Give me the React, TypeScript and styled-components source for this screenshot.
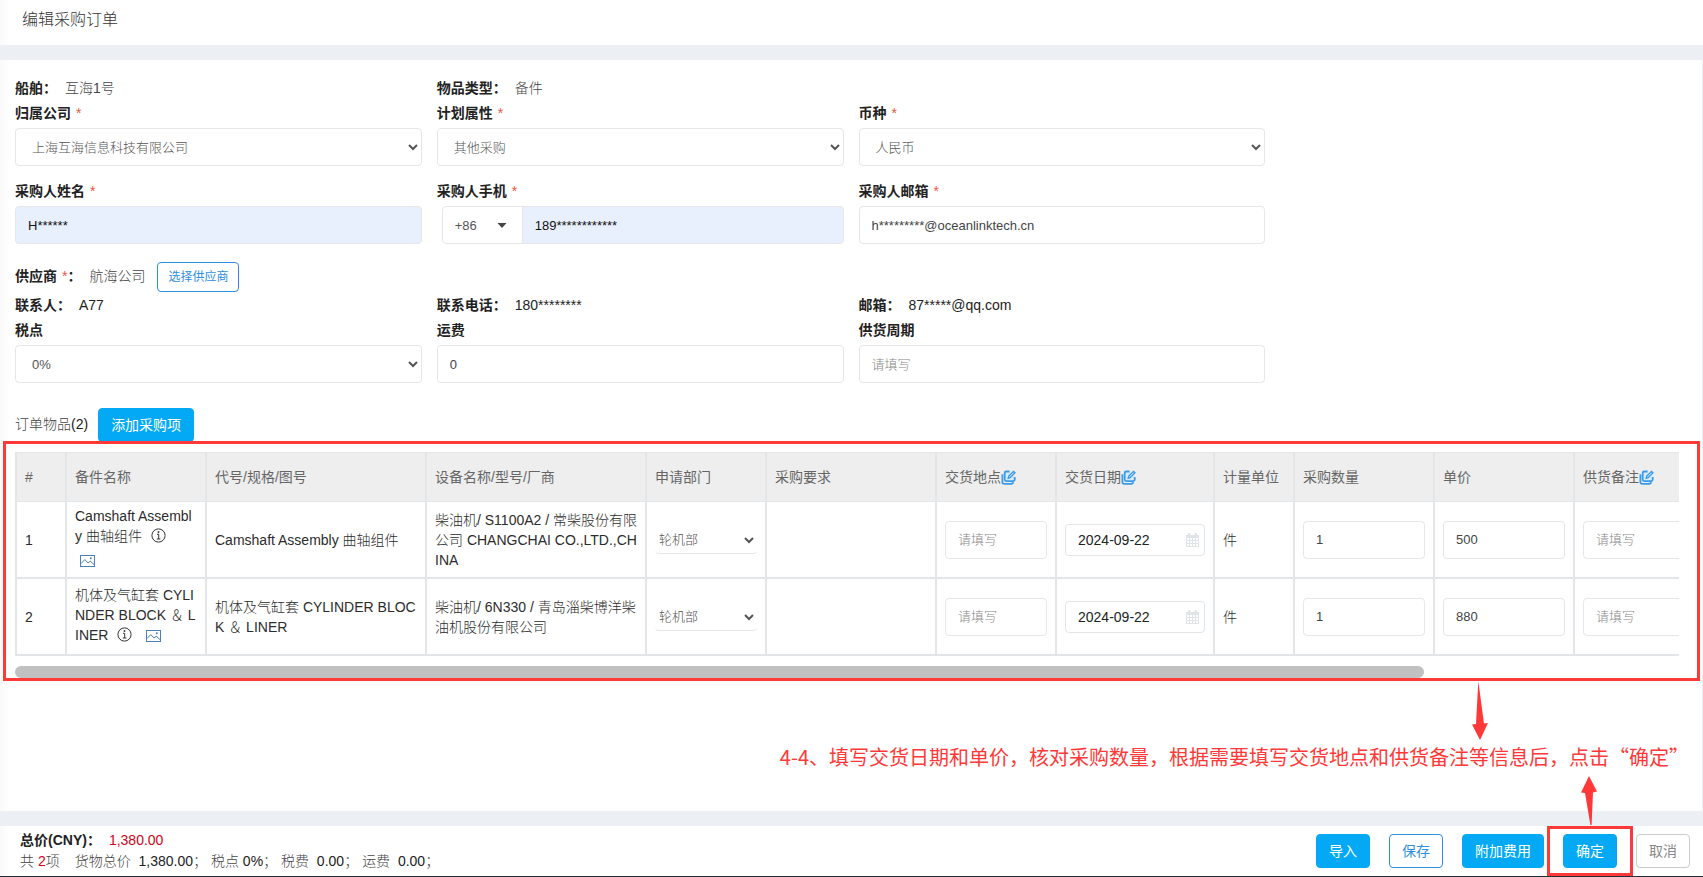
import React, { useEffect, useRef, useState } from "react";
import styled, { createGlobalStyle, css } from "styled-components";

const color = {
  text: "#222",
  soft: "#666",
  label: "#222",
  band: "#eceff4",
  border: "#e7e7e9",
  grid: "#e2e6e9",
  primary: "#03a9f4",
  link: "#2f8fe0",
  mark: "#ff3838",
  price: "#d0021b",
};

const GlobalStyle = createGlobalStyle`
  * { box-sizing: border-box; }
  body { margin: 0; }
  body, button, input, select {
    font-family: "Liberation Sans", "Noto Sans CJK SC", sans-serif;
    font-size: 14px;
    color: ${color.text};
  }
`;

const Page = styled.div`
  display: flex;
  flex-direction: column;
  min-height: 100vh;
  background: ${color.band};
`;

const surface = css`
  background: linear-gradient(to right, #fafafa, #fff 10px);
`;

const Header = styled.header`
  ${surface}
  padding: 8px 22px 13px;
  margin-bottom: 15px;
`;

const Title = styled.h1`
  margin: 0;
  font-size: 16px;
  line-height: 24px;
  font-weight: 300;
  color: #333;
`;

const Panel = styled.main`
  ${surface}
  flex: 1;
  margin: 0 1px 15px 0;
  padding-top: 16px;
`;

const Grid = styled.div`
  display: grid;
  grid-template-columns: repeat(4, 1fr);
  column-gap: 15px;
  padding: 0 15px;
`;

const Info = styled.div<{ $col?: number }>`
  grid-column: ${(p) => p.$col ?? "auto"};
  display: flex;
  gap: 8px;
  line-height: 25px;
`;

const SupplierRow = styled(Info)`
  grid-column: 1 / -1;
  padding: 5px 0 1px;
  line-height: 28px;
`;

const Name = styled.span`
  font-weight: bold;
  color: ${color.label};
`;

const Soft = styled.span`
  font-weight: 300;
  color: #444;
`;

const Star = styled.span`
  margin-left: 5px;
  font-weight: normal;
  color: #f0543f;
`;

const FieldBox = styled.div<{ $col?: number }>`
  grid-column: ${(p) => p.$col ?? "auto"};
  display: flex;
  flex-direction: column;
  gap: 2px;
  margin-bottom: 13px;
`;

const FieldLabel = styled.label`
  line-height: 25px;
  font-weight: bold;
  color: ${color.label};
`;

const control = css`
  width: 100%;
  height: 38px;
  padding: 0 12px;
  border: 1px solid ${color.border};
  border-radius: 4px;
  background: #fff;
  font-size: 13px;
  font-weight: 300;
  color: #444;
`;

const TextInput = styled.input<{ $filled?: boolean }>`
  ${control}
  ${(p) => p.$filled && css`
    background: #e8f0fe;
    color: #111;
  `}
  &::placeholder {
    color: #888;
  }
`;

const Select = styled.select`
  ${control}
  color: #555;
`;

const PhoneGroup = styled.div`
  display: flex;
  margin-left: 5px;
`;

const PrefixButton = styled.button`
  display: flex;
  align-items: center;
  justify-content: space-between;
  flex: none;
  width: 81px;
  height: 38px;
  margin-right: -1px;
  padding: 0 15px 0 12px;
  border: 1px solid ${color.border};
  border-radius: 4px 0 0 4px;
  background: #fff;
  font-size: 13px;
  color: #555;
`;

const PhoneInput = styled(TextInput)`
  border-radius: 0 4px 4px 0;
`;

const Button = styled.button<{ $kind?: "primary" | "outline" | "muted" | "small" }>`
  height: 34px;
  padding: 0 12px;
  border: 1px solid ${color.primary};
  border-radius: 4px;
  background: ${color.primary};
  line-height: 20px;
  color: #fff;
  white-space: nowrap;
  ${(p) => (p.$kind === "outline" || p.$kind === "small") && css`
    border-color: ${color.link};
    background: #fff;
    color: ${color.link};
  `}
  ${(p) => p.$kind === "small" && css`
    height: 30px;
    margin-left: 4px;
    padding: 0 10px;
    font-size: 12px;
  `}
  ${(p) => p.$kind === "muted" && css`
    border-color: #ccc;
    background: #fff;
    color: #888;
  `}
`;

const ItemsBar = styled.div`
  display: flex;
  gap: 10px;
  padding: 12px 15px 0;
  line-height: 32px;
`;

const MarkedArea = styled.section`
  position: relative;
  margin: -1px 2px 0 3px;
  padding: 8px 18px 0 9px;
  border: 3px solid ${color.mark};
`;

const Scroller = styled.div`
  overflow-x: auto;
  scrollbar-width: none;
`;

const Track = styled.div`
  height: 12px;
  margin-top: 10px;
`;

const Thumb = styled.div`
  height: 12px;
  border-radius: 6px;
  background: #c1c1c1;
`;

const Table = styled.table`
  width: 1965px;
  table-layout: fixed;
  border-collapse: separate;
  border-spacing: 0;
  border-left: 2px solid ${color.grid};
  line-height: 20px;
`;

const Th = styled.th`
  height: 50px;
  padding: 0 8px;
  border: solid ${color.grid};
  border-width: 1px 2px 1px 0;
  background: #eee;
  text-align: left;
  font-weight: normal;
  color: ${color.soft};
  white-space: nowrap;
`;

const Td = styled.td`
  height: 77px;
  padding: 0 8px;
  border: solid ${color.grid};
  border-width: 0 2px 2px 0;
  word-break: break-all;
  font-weight: 300;
  color: #2c2c2c;
`;

const DeptSelect = styled.select`
  display: block;
  width: 100%;
  height: 28px;
  border: 0;
  border-bottom: 1px solid ${color.border};
  border-radius: 4px;
  background: #fff;
  font-size: 13px;
  font-weight: 300;
  color: #555;
`;

const DateBox = styled.div`
  display: flex;
  align-items: center;
  height: 32px;
  padding: 0 5px 0 12px;
  border: 1px solid ${color.grid};
  border-radius: 4px;
`;

const DateInput = styled.input`
  flex: 1;
  min-width: 0;
  padding: 0;
  border: 0;
  background: none;
`;

const CellIcon = styled.svg`
  margin: 0 5px 7px;
  vertical-align: -9px;
`;

const HeadIcon = styled.svg`
  vertical-align: -3px;
`;

const Note = styled.div`
  display: flex;
  flex-direction: column;
  align-items: flex-end;
`;

const DownArrow = styled.svg`
  margin-right: 214px;
`;

const NoteText = styled.p`
  margin: 2px 13px 0 0;
  font-family: "Noto Sans CJK SC", sans-serif;
  font-size: 20px;
  line-height: 30px;
  color: ${color.mark};
`;

const Footer = styled.footer`
  ${surface}
  display: flex;
  align-items: center;
  justify-content: space-between;
  min-height: 51px;
  padding: 0 13px 0 20px;
  border-bottom: 1px solid #1f2d3d;
`;

const Totals = styled.div`
  line-height: 21px;
`;

const SumLine = styled.div`
  display: flex;
  gap: 4px;
`;

const TotalLine = styled(SumLine)`
  gap: 8px;
`;

const Count = styled.span`
  margin-right: 11px;
`;

const Price = styled.span`
  color: ${color.price};
`;

const Actions = styled.div`
  display: flex;
  gap: 19px;
`;

const ConfirmSlot = styled.div`
  position: relative;
`;

const ConfirmFrame = styled.div`
  position: absolute;
  inset: -8px -16px;
  border: 3px solid ${color.mark};
  pointer-events: none;
`;

const UpArrow = styled.svg`
  position: absolute;
  left: 18px;
  bottom: 43px;
`;

function EditIcon() {
  return (
    <HeadIcon width="15" height="15" viewBox="0 0 15 15" fill="none" stroke="#3b9ae8">
      <path d="M8.6 1.5 H5.2 Q3.7 1.5 3.7 3 V9.6 Q3.7 11.1 5.2 11.1 H12.2 Q13.7 11.1 13.7 9.6 V7" fill="#d9ecfb" strokeWidth="1.8" />
      <path d="M1.4 4.2 V12 Q1.4 13.8 3.2 13.8 H10.8 L12.6 12.4" strokeWidth="1.8" />
      <path d="M7.2 8.2 L7.7 6.2 L12.5 1.4 L14 2.8 L9.2 7.6 Z" fill="#d9ecfb" strokeWidth="1.3" />
    </HeadIcon>
  );
}

function InfoIcon() {
  return (
    <CellIcon width="15" height="15" viewBox="0 0 15 15" fill="none" stroke="#333">
      <circle cx="7.5" cy="7.5" r="6.6" />
      <path d="M6 6.3 H7.7 V11 M5.8 11 H9.4" />
      <circle cx="7.5" cy="4" r="0.9" fill="#333" stroke="none" />
    </CellIcon>
  );
}

function PictureIcon() {
  return (
    <CellIcon width="15" height="12" viewBox="0 0 15 12" fill="none" stroke="#4a7fc1">
      <rect x="0.5" y="0.5" width="14" height="11" />
      <path d="M1 8.5 L4.8 4.6 L8 8 L10.2 6.2 L14 9.5" />
      <circle cx="10.8" cy="3.2" r="1" fill="#4a7fc1" stroke="none" />
    </CellIcon>
  );
}

function CalendarIcon() {
  return (
    <svg width="13" height="14" viewBox="0 0 13 14" fill="#dfe4e6">
      <path d="M0 2 H2 V0.8 Q2 0 3 0 H3.6 Q4.5 0 4.5 0.8 V2 H8.5 V0.8 Q8.5 0 9.4 0 H10 Q11 0 11 0.8 V2 H13 V14 H0 Z" />
      <g fill="#fff">
        {[5, 8, 11].map((y) => [1, 4, 7, 10].map((x) => <rect key={`${x}-${y}`} x={x} y={y} width="2" height="2" />))}
      </g>
    </svg>
  );
}

interface FieldProps {
  id: string;
  label: string;
  required?: boolean;
  col?: number;
  children: React.ReactNode;
}

function Field({ id, label, required, col, children }: FieldProps) {
  return (
    <FieldBox $col={col}>
      <FieldLabel htmlFor={id}>
        {label}
        {required && <Star>*</Star>}
      </FieldLabel>
      {children}
    </FieldBox>
  );
}

const columns: { title: string; width: number; editable?: boolean }[] = [
  { title: "#", width: 50 },
  { title: "备件名称", width: 140 },
  { title: "代号/规格/图号", width: 220 },
  { title: "设备名称/型号/厂商", width: 220 },
  { title: "申请部门", width: 120 },
  { title: "采购要求", width: 170 },
  { title: "交货地点", width: 120, editable: true },
  { title: "交货日期", width: 158, editable: true },
  { title: "计量单位", width: 80 },
  { title: "采购数量", width: 140 },
  { title: "单价", width: 140 },
  { title: "供货备注", width: 405, editable: true },
];

const items = [
  {
    name: "Camshaft Assembly 曲轴组件",
    code: "Camshaft Assembly 曲轴组件",
    device: "柴油机/ S1100A2 / 常柴股份有限公司 CHANGCHAI CO.,LTD.,CHINA",
    price: "500",
  },
  {
    name: "机体及气缸套 CYLINDER BLOCK ＆ LINER",
    code: "机体及气缸套 CYLINDER BLOCK ＆ LINER",
    device: "柴油机/ 6N330 / 青岛淄柴博洋柴油机股份有限公司",
    price: "880",
  },
];

function ItemsTable() {
  const ref = useRef<HTMLDivElement>(null);
  const [bar, setBar] = useState({ width: 85, left: 0 });

  const measure = () => {
    const el = ref.current;
    if (!el) return;
    setBar({
      width: (el.clientWidth / el.scrollWidth) * 100,
      left: (el.scrollLeft / el.scrollWidth) * 100,
    });
  };

  useEffect(() => {
    measure();
    window.addEventListener("resize", measure);
    return () => window.removeEventListener("resize", measure);
  }, []);

  return (
    <MarkedArea>
      <Scroller ref={ref} onScroll={measure}>
        <Table>
          <colgroup>
            {columns.map((c) => (
              <col key={c.title} width={c.width} />
            ))}
          </colgroup>
          <thead>
            <tr>
              {columns.map((c) => (
                <Th key={c.title}>
                  {c.title}
                  {c.editable && <EditIcon />}
                </Th>
              ))}
            </tr>
          </thead>
          <tbody>
            {items.map((it, i) => (
              <tr key={i}>
                <Td>{i + 1}</Td>
                <Td>
                  {it.name} <InfoIcon /> <PictureIcon />
                </Td>
                <Td>{it.code}</Td>
                <Td>{it.device}</Td>
                <Td>
                  <DeptSelect aria-label="申请部门">
                    <option>轮机部</option>
                  </DeptSelect>
                </Td>
                <Td />
                <Td><TextInput aria-label="交货地点" placeholder="请填写" /></Td>
                <Td>
                  <DateBox>
                    <DateInput aria-label="交货日期" defaultValue="2024-09-22" />
                    <CalendarIcon />
                  </DateBox>
                </Td>
                <Td>件</Td>
                <Td><TextInput aria-label="采购数量" defaultValue="1" /></Td>
                <Td><TextInput aria-label="单价" defaultValue={it.price} /></Td>
                <Td><TextInput aria-label="供货备注" placeholder="请填写" /></Td>
              </tr>
            ))}
          </tbody>
        </Table>
      </Scroller>
      <Track>
        <Thumb style={{ width: `${bar.width}%`, marginLeft: `${bar.left}%` }} />
      </Track>
    </MarkedArea>
  );
}

export default function App() {
  return (
    <Page>
      <GlobalStyle />
      <Header>
        <Title>编辑采购订单</Title>
      </Header>

      <Panel>
        <Grid>
          <Info>
            <Name>船舶：</Name>
            <Soft>互海1号</Soft>
          </Info>
          <Info $col={2}>
            <Name>物品类型：</Name>
            <Soft>备件</Soft>
          </Info>

          <Field id="company" label="归属公司" required col={1}>
            <Select id="company"><option>上海互海信息科技有限公司</option></Select>
          </Field>
          <Field id="plan" label="计划属性" required>
            <Select id="plan"><option>其他采购</option></Select>
          </Field>
          <Field id="currency" label="币种" required>
            <Select id="currency"><option>人民币</option></Select>
          </Field>

          <Field id="buyer" label="采购人姓名" required col={1}>
            <TextInput id="buyer" $filled defaultValue="H******" />
          </Field>
          <Field id="phone" label="采购人手机" required>
            <PhoneGroup>
              <PrefixButton type="button">
                +86
                <svg width="10" height="5" viewBox="0 0 10 5"><path d="M0.5 0 H9.5 L5 5 Z" fill="#444" /></svg>
              </PrefixButton>
              <PhoneInput id="phone" $filled defaultValue="189************" />
            </PhoneGroup>
          </Field>
          <Field id="mail" label="采购人邮箱" required>
            <TextInput id="mail" defaultValue="h*********@oceanlinktech.cn" />
          </Field>

          <SupplierRow>
            <Name>供应商<Star>*</Star>：</Name>
            <Soft>航海公司</Soft>
            <Button type="button" $kind="small">选择供应商</Button>
          </SupplierRow>

          <Info $col={1}>
            <Name>联系人：</Name>
            <span>A77</span>
          </Info>
          <Info>
            <Name>联系电话：</Name>
            <span>180********</span>
          </Info>
          <Info>
            <Name>邮箱：</Name>
            <span>87*****@qq.com</span>
          </Info>

          <Field id="tax" label="税点" col={1}>
            <Select id="tax"><option>0%</option></Select>
          </Field>
          <Field id="freight" label="运费">
            <TextInput id="freight" defaultValue="0" />
          </Field>
          <Field id="cycle" label="供货周期">
            <TextInput id="cycle" placeholder="请填写" />
          </Field>
        </Grid>

        <ItemsBar>
          <span><Soft>订单物品</Soft>(2)</span>
          <Button type="button">添加采购项</Button>
        </ItemsBar>

        <ItemsTable />

        <Note>
          <DownArrow width="16" height="59" viewBox="0 0 16 59" fill={color.mark}>
            <path d="M6.3 0 L12 42.5 L16 42 L8 59 L0 43.5 L4 43 Z" />
          </DownArrow>
          <NoteText>
            4-4、填写交货日期和单价，核对采购数量，根据需要填写交货地点和供货备注等信息后，点击“确定”
          </NoteText>
        </Note>
      </Panel>

      <Footer>
        <Totals>
          <TotalLine>
            <Name>总价(CNY)：</Name>
            <Price>1,380.00</Price>
          </TotalLine>
          <SumLine>
            <Count><Soft>共</Soft> <Price>2</Price><Soft>项</Soft></Count>
            <span><Soft>货物总价</Soft>&nbsp; 1,380.00<Soft>；</Soft></span>
            <span><Soft>税点</Soft> 0%<Soft>；</Soft></span>
            <span><Soft>税费</Soft>&nbsp; 0.00<Soft>；</Soft></span>
            <span><Soft>运费</Soft>&nbsp; 0.00<Soft>；</Soft></span>
          </SumLine>
        </Totals>
        <Actions>
          <Button type="button">导入</Button>
          <Button type="button" $kind="outline">保存</Button>
          <Button type="button">附加费用</Button>
          <ConfirmSlot>
            <Button type="button">确定</Button>
            <ConfirmFrame />
            <UpArrow width="16" height="49" viewBox="0 0 16 49" fill={color.mark}>
              <path d="M8 0 L16 15.5 L12 16.5 L10.6 49 L9.4 49 L4 17 L0 16.5 Z" />
            </UpArrow>
          </ConfirmSlot>
          <Button type="button" $kind="muted">取消</Button>
        </Actions>
      </Footer>
    </Page>
  );
}
